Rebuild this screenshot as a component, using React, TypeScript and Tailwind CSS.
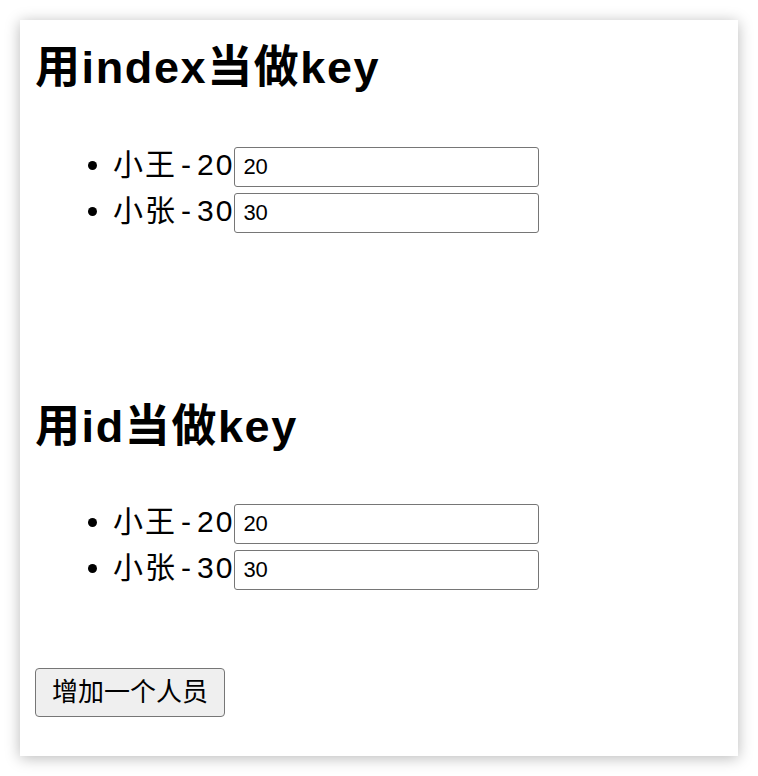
import React from "react";

const people = [
  { id: 1, name: "小王", age: 20 },
  { id: 2, name: "小张", age: 30 },
];

const font = { fontFamily: '"Liberation Sans", "Noto Sans CJK SC", sans-serif' };

const PersonList = () => {
  return (
    <ul className="list-disc pl-[78px]">
      {people.map((p) => (
        <li key={p.id} className="h-[46px] text-[30px] leading-[46px] text-black">
          <span className="tracking-[2px]">
            {p.name}
            <span className="px-[4px]">-</span>
            {p.age}
          </span>
          <input
            defaultValue={p.age}
            className="h-[40px] w-[305px] border border-[#767676] rounded-[3px] px-[8px] text-[22px] align-middle text-black"
            style={font}
          />
        </li>
      ))}
    </ul>
  );
};

const App = () => {
  return (
    <div className="min-h-screen bg-white p-5" style={font}>
      <div className="h-[736px] bg-white px-[15px] pt-[21px] shadow-[0_2px_14px_rgba(0,0,0,0.28)]">
        <h2 className="text-[45px] font-bold leading-[54px] tracking-[1.6px] text-black">用index当做key</h2>
        <div className="mt-[47px]">
          <PersonList />
        </div>

        <h2 className="mt-[166px] text-[45px] font-bold leading-[54px] tracking-[1.6px] text-black">用id当做key</h2>
        <div className="mt-[45px]">
          <PersonList />
        </div>

        <button
          className="mt-[77px] h-[49px] w-[190px] rounded-[4px] border border-[#767676] bg-[#efefef] text-[26px] text-black"
          style={font}
        >
          增加一个人员
        </button>
      </div>
    </div>
  );
};

export default App;
